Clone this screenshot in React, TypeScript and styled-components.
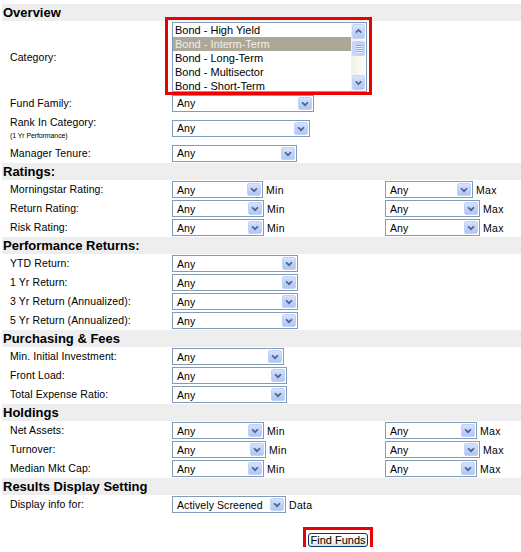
import styled, { createGlobalStyle } from "styled-components";

const GlobalStyle = createGlobalStyle`
  html, body {
    margin: 0;
    padding: 0;
    background: #fff;
    overflow: hidden;
  }
  body {
    font-family: "Liberation Sans", Arial, sans-serif;
    color: #000;
  }
`;

type Pair = { label: string; min: number; max: number };

const ratings: Pair[] = [
  { label: "Morningstar Rating:", min: 91, max: 88 },
  { label: "Return Rating:", min: 92, max: 95 },
  { label: "Risk Rating:", min: 92, max: 95 },
];

const returns = [
  "YTD Return:",
  "1 Yr Return:",
  "3 Yr Return (Annualized):",
  "5 Yr Return (Annualized):",
];

const fees = [
  { label: "Min. Initial Investment:", w: 112 },
  { label: "Front Load:", w: 115 },
  { label: "Total Expense Ratio:", w: 115 },
];

const holdings: Pair[] = [
  { label: "Net Assets:", min: 92, max: 92 },
  { label: "Turnover:", min: 94, max: 95 },
  { label: "Median Mkt Cap:", min: 92, max: 92 },
];

const categories = [
  "Bond - High Yield",
  "Bond - Interm-Term",
  "Bond - Long-Term",
  "Bond - Multisector",
  "Bond - Short-Term",
];

function Chevron({ up }: { up?: boolean }) {
  return (
    <svg width="14" height="13" viewBox="0 0 14 13">
      <path
        d={up ? "M3.5 8 L7 4.5 L10.5 8" : "M3.5 5 L7 8.5 L10.5 5"}
        stroke="#4d6185"
        strokeWidth="2"
        fill="none"
      />
    </svg>
  );
}

function Dropdown({ w, value = "Any" }: { w: number; value?: string }) {
  return (
    <SelectBox $w={w}>
      <Value>{value}</Value>
      <ArrowButton>
        <Chevron />
      </ArrowButton>
    </SelectBox>
  );
}

function MinMaxRow({ row }: { row: Pair }) {
  return (
    <Row>
      <Label>{row.label}</Label>
      <Field>
        <Dropdown w={row.min} />
        <Unit>Min</Unit>
      </Field>
      <Field>
        <Dropdown w={row.max} />
        <Unit>Max</Unit>
      </Field>
    </Row>
  );
}

function App() {
  return (
    <Page>
      <GlobalStyle />
      <SectionHeader>Overview</SectionHeader>
      <Row $h={72}>
        <Label>Category:</Label>
        <Field>
          <ListFrame>
            <Callout />
            <Options>
              {categories.map((c, i) => (
                <Option key={c} $selected={i === 1}>
                  {c}
                </Option>
              ))}
            </Options>
            <Scrollbar>
              <ScrollButton>
                <Chevron up />
              </ScrollButton>
              <Thumb>
                <Grip />
                <Grip />
                <Grip />
                <Grip />
              </Thumb>
              <Track />
              <ScrollButton>
                <Chevron />
              </ScrollButton>
            </Scrollbar>
          </ListFrame>
        </Field>
      </Row>
      <Row $h={20}>
        <Label>Fund Family:</Label>
        <Field>
          <Dropdown w={142} />
        </Field>
      </Row>
      <Row $h={30}>
        <Label>
          Rank In Category:
          <SubLabel>(1 Yr Performance)</SubLabel>
        </Label>
        <Field>
          <Dropdown w={138} />
        </Field>
      </Row>
      <Row $h={20}>
        <Label>Manager Tenure:</Label>
        <Field>
          <Dropdown w={125} />
        </Field>
      </Row>

      <SectionHeader>Ratings:</SectionHeader>
      {ratings.map((r) => (
        <MinMaxRow key={r.label} row={r} />
      ))}

      <SectionHeader>Performance Returns:</SectionHeader>
      {returns.map((r) => (
        <Row key={r}>
          <Label>{r}</Label>
          <Field>
            <Dropdown w={126} />
          </Field>
        </Row>
      ))}

      <SectionHeader>Purchasing &amp; Fees</SectionHeader>
      {fees.map((f) => (
        <Row key={f.label}>
          <Label>{f.label}</Label>
          <Field>
            <Dropdown w={f.w} />
          </Field>
        </Row>
      ))}

      <SectionHeader>Holdings</SectionHeader>
      {holdings.map((h) => (
        <MinMaxRow key={h.label} row={h} />
      ))}

      <SectionHeader>Results Display Setting</SectionHeader>
      <Row>
        <Label>Display info for:</Label>
        <Field>
          <Dropdown w={114} value="Actively Screened" />
          <Unit>Data</Unit>
        </Field>
      </Row>

      <ButtonRow>
        <FindButton>
          <Callout $button />
          Find Funds
        </FindButton>
      </ButtonRow>
    </Page>
  );
}

export default App;

const Page = styled.div`
  padding: 4px 0 0 2px;
  width: 519px;
`;

const SectionHeader = styled.div`
  height: 17px;
  line-height: 17px;
  background: #eeeeee;
  font-size: 13px;
  font-weight: 700;
  padding-left: 1px;
`;

const Row = styled.div<{ $h?: number }>`
  display: grid;
  grid-template-columns: 170px 213px auto;
  align-items: center;
  height: ${(p) => p.$h ?? 19}px;
`;

const Label = styled.div`
  padding-left: 8px;
  font-size: 10.5px;
  line-height: 13px;
  letter-spacing: 0.1px;
`;

const SubLabel = styled.span`
  display: block;
  font-size: 7px;
  line-height: 10px;
  margin-top: 2px;
  letter-spacing: -0.1px;
`;

const Field = styled.div`
  display: flex;
  align-items: center;
  gap: 3px;
`;

const Unit = styled.span`
  font-size: 10.5px;
  letter-spacing: 0.3px;
`;

const SelectBox = styled.div<{ $w: number }>`
  box-sizing: border-box;
  width: ${(p) => p.$w}px;
  height: 17px;
  border: 1px solid #7f9db9;
  background: #fff;
  display: flex;
  align-items: center;
  justify-content: space-between;
  padding-left: 4px;
`;

const Value = styled.span`
  font-size: 10.5px;
  letter-spacing: 0.1px;
  white-space: nowrap;
`;

const ArrowButton = styled.div`
  box-sizing: border-box;
  flex: none;
  width: 14px;
  height: 13px;
  margin: 1px;
  border: 1px solid #c0d1fa;
  border-radius: 2px;
  background: linear-gradient(180deg, #d5e1fe 0%, #bccff9 60%, #b2c7f6 100%);
  display: flex;
  align-items: center;
  justify-content: center;

  svg {
    width: 12px;
    height: 11px;
  }
`;

const ListFrame = styled.div`
  position: relative;
  box-sizing: border-box;
  width: 195px;
  height: 70px;
  border: 1px solid #7f9db9;
  background: #fff;
  display: flex;
`;

const Callout = styled.div<{ $button?: boolean }>`
  position: absolute;
  border: 3px solid #ee0000;
  pointer-events: none;
  ${(p) =>
    p.$button
      ? `top: -7px; bottom: -5px; left: -6px; right: -6px;`
      : `top: -6px; bottom: -4px; left: -8px; right: -6px;`}
`;

const Options = styled.div`
  flex: 1;
  overflow: hidden;
`;

const Option = styled.div<{ $selected?: boolean }>`
  height: 14px;
  line-height: 14px;
  padding-left: 2px;
  font-size: 11px;
  white-space: nowrap;
  background: ${(p) => (p.$selected ? "#aca899" : "transparent")};
  color: ${(p) => (p.$selected ? "#f1efe6" : "#000")};
`;

const Scrollbar = styled.div`
  width: 15px;
  display: flex;
  flex-direction: column;
  background: linear-gradient(90deg, #f1efe8 0%, #fdfdfa 100%);
`;

const ScrollButton = styled.div`
  box-sizing: border-box;
  height: 15px;
  margin: 1px 1px 0 1px;
  border: 1px solid #c3d3fb;
  border-radius: 2px;
  background: linear-gradient(180deg, #dbe5fe 0%, #bfd1fa 60%, #b5c9f7 100%);
  display: flex;
  align-items: center;
  justify-content: center;

  &:last-child {
    margin: 0 1px 1px 1px;
  }

  svg {
    width: 11px;
    height: 11px;
  }
`;

const Thumb = styled.div`
  box-sizing: border-box;
  height: 15px;
  margin: 2px 1px 0 1px;
  border: 1px solid #c3d3fb;
  border-radius: 2px;
  background: linear-gradient(90deg, #c9d8fc 0%, #bccff9 100%);
  display: flex;
  flex-direction: column;
  align-items: center;
  justify-content: center;
  gap: 1px;
`;

const Grip = styled.div`
  width: 6px;
  height: 1px;
  background: #8ea6e6;
  box-shadow: 0 1px 0 #eef3ff;
`;

const Track = styled.div`
  flex: 1;
`;

const ButtonRow = styled.div`
  padding: 19px 0 0 306px;
`;

const FindButton = styled.button`
  position: relative;
  box-sizing: border-box;
  width: 60px;
  height: 14px;
  padding: 0;
  border: 1px solid #003c74;
  border-radius: 3px;
  background: linear-gradient(180deg, #ffffff 0%, #f3f2ec 60%, #e3e0d2 100%);
  font-family: "Liberation Sans", Arial, sans-serif;
  font-size: 11px;
  line-height: 12px;
  white-space: nowrap;
  color: #000;
  display: block;
`;
